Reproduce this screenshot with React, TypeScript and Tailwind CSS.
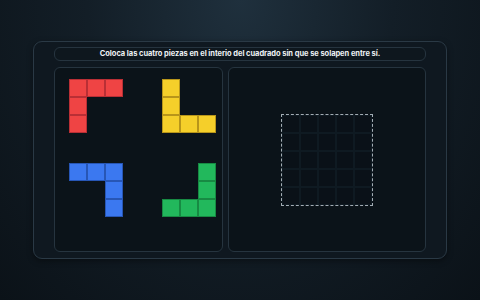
import React from "react";

type Piece = {
    cells: [number, number][];
    fill: string;
};

const pieces: Piece[] = [
    { cells: [[0, 0], [1, 0], [2, 0], [0, 1], [0, 2]], fill: "bg-[#ef4444] border-[#b92f35]" },
    { cells: [[0, 0], [0, 1], [0, 2], [1, 2], [2, 2]], fill: "bg-[#f5cf2a] border-[#b8951a]" },
    { cells: [[0, 0], [1, 0], [2, 0], [2, 1], [2, 2]], fill: "bg-[#3b78f0] border-[#2756b5]" },
    { cells: [[2, 0], [2, 1], [0, 2], [1, 2], [2, 2]], fill: "bg-[#22b85c] border-[#178a43]" },
];

const PieceView = ({ piece }: { piece: Piece }) => {
    return (
        <div className="grid grid-cols-[repeat(3,18px)] grid-rows-[repeat(3,18px)]">
            {piece.cells.map(([x, y], i) => (
                <div
                    key={i}
                    className={`border ${piece.fill}`}
                    style={{ gridColumnStart: x + 1, gridRowStart: y + 1 }}
                />
            ))}
        </div>
    );
};

const App = () => {
    return (
        <div
            className="w-[480px] h-[300px] overflow-hidden bg-[radial-gradient(ellipse_at_50%_0%,#1f303d_0%,#131e27_45%,#0b1218_100%)] pt-[41px] pl-[33px]"
            style={{ fontFamily: "Inter, 'Liberation Sans', sans-serif" }}
        >
            <div className="w-[414px] h-[218px] rounded-[9px] border border-[#2a3945] bg-[#0f1820] px-[20px] pt-[5px] pb-[6px] flex flex-col gap-[6px] shadow-[0_2px_6px_rgba(0,0,0,0.4)]">
                {/* title */}
                <div className="h-[14px] rounded-[6px] border border-[#26343f] bg-[#0e171e] flex items-center justify-center">
                    <span className="text-[7.5px] leading-none font-bold text-[#eef2f5] tracking-[-0.05px]">
                        Coloca las cuatro piezas en el interio del cuadrado sin que se solapen entre sí.
                    </span>
                </div>
                <div className="flex-1 flex gap-[5px]">
                    {/* pieces tray */}
                    <div className="w-[169px] rounded-[6px] border border-[#26343f] bg-[#0b1319] pl-[14px] pt-[11px]">
                        <div className="grid grid-cols-[54px_54px] grid-rows-[54px_54px] gap-x-[39px] gap-y-[30px]">
                            {pieces.map((p, i) => (
                                <PieceView key={i} piece={p} />
                            ))}
                        </div>
                    </div>
                    {/* board */}
                    <div className="flex-1 rounded-[6px] border border-[#26343f] bg-[#0b1319] flex items-center justify-center">
                        <div className="w-[92px] h-[92px] border border-dashed border-[#a3adb5] grid grid-cols-5 grid-rows-5 bg-[#0a1118]">
                            {Array.from({ length: 25 }).map((_, i) => (
                                <div key={i} className="border-[0.5px] border-[#0f1a22]" />
                            ))}
                        </div>
                    </div>
                </div>
            </div>
        </div>
    );
};

export default App;
